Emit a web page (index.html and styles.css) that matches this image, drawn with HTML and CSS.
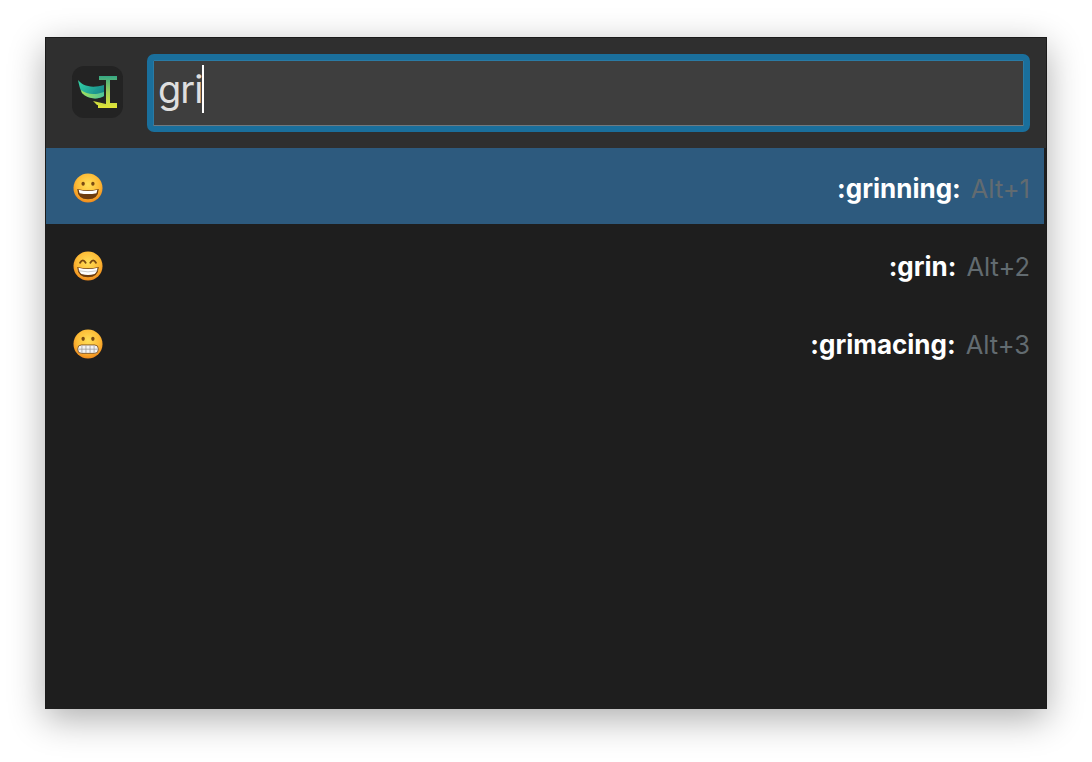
FILE: index.html
```html
<!DOCTYPE html>
<html lang="en">
<head>
    <meta charset="UTF-8">
    <title>Emoji Launcher</title>
    <link rel="stylesheet" href="styles.css">
</head>
<body>
    <svg class="defs" width="0" height="0">
        <defs>
            <radialGradient id="face" cx="0.5" cy="0.38" r="0.65">
                <stop offset="0" stop-color="#ffdf58"/>
                <stop offset="0.6" stop-color="#fdbb36"/>
                <stop offset="1" stop-color="#ee8418"/>
            </radialGradient>
            <linearGradient id="logoWing" x1="0" y1="0" x2="1" y2="0.6">
                <stop offset="0" stop-color="#35d6a8"/>
                <stop offset="1" stop-color="#17868a"/>
            </linearGradient>
            <linearGradient id="logoBelly" x1="0" y1="0" x2="1" y2="0">
                <stop offset="0" stop-color="#a6e05a"/>
                <stop offset="1" stop-color="#4cc49a"/>
            </linearGradient>
            <linearGradient id="logoStem" x1="0" y1="0" x2="0" y2="1">
                <stop offset="0" stop-color="#35a884"/>
                <stop offset="0.5" stop-color="#9fce5a"/>
                <stop offset="1" stop-color="#e3e436"/>
            </linearGradient>
            <filter id="soft"><feGaussianBlur stdDeviation="0.6"/></filter>
        </defs>
    </svg>

    <div class="launcher">
        <header class="search-bar">
            <div class="app-icon">
                <svg width="51" height="52" viewBox="0 0 51 52">
                    <g filter="url(#soft)">
                        <path d="M27 10 H45 V14 H38 V37 H45 V42 H26 V38 H34 V14 H27Z" fill="url(#logoStem)"/>
                        <path d="M6 14 C10 19 18 23 32 19 V30 C26 34 15 33 10 27 C8 23 7 19 6 14Z" fill="url(#logoWing)"/>
                        <path d="M9 24 C15 29 24 29 32 26 V30 C26 34 15 33 10 27Z" fill="url(#logoBelly)"/>
                        <path d="M21 35 L34 38 V40 L25 39Z" fill="#cfdc3e"/>
                    </g>
                </svg>
            </div>
            <div class="search-input"><span class="search-text">gri</span><span class="caret"></span></div>
        </header>

        <ul class="results">
            <li class="result selected">
                <svg class="emoji" width="30" height="30" viewBox="0 0 32 32">
                    <circle cx="16" cy="16" r="15.500" fill="url(#face)"/>
                    <ellipse cx="10.800" cy="11.500" rx="1.800" ry="2.200" fill="#7a4a12"/>
                    <ellipse cx="21.200" cy="11.500" rx="1.800" ry="2.200" fill="#7a4a12"/>
                    <path d="M4.500 17 Q16 20 27.500 17 Q27 28 16 28 Q5 28 4.500 17Z" fill="#6d3c0f"/>
                    <path d="M6 17.800 Q16 20.400 26 17.800 L25 21.500 Q16 23.500 7 21.500Z" fill="#fff"/>
                </svg>
                <span class="shortcode">:grinning:</span>
                <span class="hotkey">Alt+1</span>
            </li>
            <li class="result">
                <svg class="emoji" width="30" height="30" viewBox="0 0 32 32">
                    <circle cx="16" cy="16" r="15.500" fill="url(#face)"/>
                    <path d="M7.500 12.500 Q10.500 7.500 13.500 12.500" fill="none" stroke="#7a4a12" stroke-width="2" stroke-linecap="round"/>
                    <path d="M18.500 12.500 Q21.500 7.500 24.500 12.500" fill="none" stroke="#7a4a12" stroke-width="2" stroke-linecap="round"/>
                    <path d="M4.500 17 Q16 20 27.500 17 Q27 28 16 28 Q5 28 4.500 17Z" fill="#6d3c0f"/>
                    <path d="M5.800 17.800 Q16 20.400 26.200 17.800 Q25.500 23 23 24.500 Q16 26.500 9 24.500 Q6.500 23 5.800 17.800Z" fill="#fff"/>
                    <path d="M6 21 Q16 23.500 26 21" fill="none" stroke="#b9b9b9" stroke-width="0.800"/>
                </svg>
                <span class="shortcode">:grin:</span>
                <span class="hotkey">Alt+2</span>
            </li>
            <li class="result">
                <svg class="emoji" width="30" height="30" viewBox="0 0 32 32">
                    <circle cx="16" cy="16" r="15.500" fill="url(#face)"/>
                    <ellipse cx="10.800" cy="10.500" rx="1.800" ry="2.200" fill="#7a4a12"/>
                    <ellipse cx="21.200" cy="10.500" rx="1.800" ry="2.200" fill="#7a4a12"/>
                    <rect x="5" y="17" width="22" height="9" rx="4" fill="#f4f4f4" stroke="#7a4a12" stroke-width="0.900"/>
                    <path d="M5.500 21.500 H26.500 M9.500 17.500 V25.500 M13.800 17.500 V25.500 M18.200 17.500 V25.500 M22.500 17.500 V25.500" stroke="#9a9a9a" stroke-width="0.800"/>
                </svg>
                <span class="shortcode">:grimacing:</span>
                <span class="hotkey">Alt+3</span>
            </li>
        </ul>
    </div>
</body>
</html>
```

FILE: styles.css
```css
:root {
    --header-color: #2f2f2f;
    --list-color: #1e1e1e;
    --ring-color: #1a6f9c;
    --selected-color: #2d5a7e;
    --font-family: Inter, "Noto Sans", sans-serif;
}

* {
    box-sizing: border-box;
    margin: 0;
    padding: 0;
    font-family: var(--font-family);
}

body {
    background: #fff;
    padding: 37px 45px 0;
    height: 762px;
    overflow: hidden;
}

.defs {
    display: block;
    height: 0;
}

.launcher {
    width: 1002px;
    height: 672px;
    background: var(--list-color);
    border: 1px solid #1b1b1b;
    border-bottom: none;
    box-shadow: 0 10px 34px rgba(0, 0, 0, 0.32);
}

.search-bar {
    display: flex;
    align-items: flex-start;
    gap: 24px;
    height: 110px;
    padding: 16px 16px 0 26px;
    background: var(--header-color);
}

.app-icon {
    flex: none;
    width: 51px;
    height: 52px;
    margin-top: 12px;
    background: #232323;
    border-radius: 12px;
}

.search-input {
    flex: 1;
    display: flex;
    align-items: center;
    height: 78px;
    padding: 0 5px 9px;
    background: #3e3e3e;
    border: 6px solid var(--ring-color);
    border-radius: 7px;
    box-shadow: inset 0 -1px 0 #6f7a80, inset 0 0 0 1px #2a7ba5;
}

.search-text {
    color: #dedede;
    font-size: 38px;
    font-weight: 400;
    letter-spacing: -1px;
}

.caret {
    width: 2px;
    height: 48px;
    background: #fff;
}

.results {
    list-style: none;
    padding-right: 2px;
}

.result {
    display: flex;
    align-items: center;
    height: 76px;
    margin-bottom: 2px;
    padding: 5px 14px 0 27px;
}

.selected {
    background: var(--selected-color);
}

.emoji {
    flex: none;
    margin: 0 auto 2px 0;
}

.shortcode {
    color: #fff;
    font-size: 26px;
    font-weight: 700;
}

.hotkey {
    margin-left: 10px;
    color: #626b70;
    font-size: 25.5px;
    font-weight: 400;
}
```
